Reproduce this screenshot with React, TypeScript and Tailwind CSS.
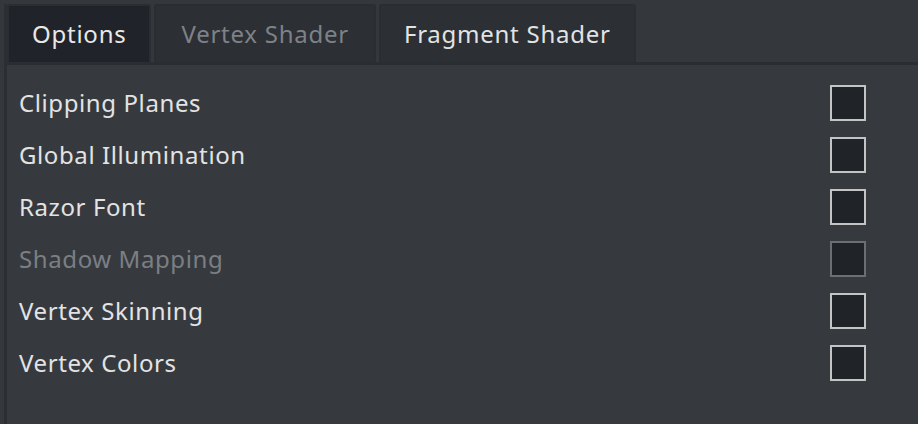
import React from 'react'

const tabs = [
  { label: 'Options', state: 'active' },
  { label: 'Vertex Shader', state: 'disabled' },
  { label: 'Fragment Shader', state: 'normal' }
]

const options = [
  { label: 'Clipping Planes', disabled: false },
  { label: 'Global Illumination', disabled: false },
  { label: 'Razor Font', disabled: false },
  { label: 'Shadow Mapping', disabled: true },
  { label: 'Vertex Skinning', disabled: false },
  { label: 'Vertex Colors', disabled: false }
]

export default function App() {
  return (
    <div
      className="w-[918px] h-[424px] bg-[#34373c] pl-[4px] pt-[4px] overflow-hidden"
      style={{ fontFamily: '"Noto Sans", "Open Sans", sans-serif' }}
    >
      <div className="h-full flex flex-col border-l-[3px] border-[#2b2e32]">
        {/* Tab bar */}
        <div className="flex gap-[3px] border-b-[3px] border-[#2a2d31]">
          {tabs.map((tab) => (
            <div
              key={tab.label}
              className={
                tab.state === 'active'
                  ? 'h-[58px] px-[23px] flex items-center rounded-t-[3px] border-2 border-b-0 border-[#2a2d31] bg-[#202329] text-[24px] tracking-[0.75px] text-[#e8e8e8]'
                  : tab.state === 'disabled'
                    ? 'h-[58px] px-[25px] flex items-center rounded-t-[3px] border-2 border-b-0 border-[#2a2d31] bg-[#2c2f34] text-[24px] tracking-[0.75px] text-[#7e8287]'
                    : 'h-[58px] px-[23px] flex items-center rounded-t-[3px] border-2 border-b-0 border-[#2a2d31] bg-[#2c2f34] text-[24px] tracking-[0.75px] text-[#e3e3e3]'
              }
            >
              {tab.label}
            </div>
          ))}
        </div>

        {/* Options panel */}
        <div className="flex-1 bg-[#363a3f] pt-[12px] pl-[12px] pr-[52px]">
          {options.map((opt) => (
            <div key={opt.label} className="h-[52px] flex items-center justify-between">
              <span
                className={
                  opt.disabled
                    ? 'text-[24px] tracking-[0.6px] text-[#7b7f84]'
                    : 'text-[24px] tracking-[0.6px] text-[#e3e3e3]'
                }
              >
                {opt.label}
              </span>
              <div
                className={
                  opt.disabled
                    ? 'w-[36px] h-[36px] border-[2px] border-[#6b6e72] bg-[#202328]'
                    : 'w-[36px] h-[36px] border-[2px] border-[#c4c4c4] bg-[#202328]'
                }
              />
            </div>
          ))}
        </div>
      </div>
    </div>
  )
}
